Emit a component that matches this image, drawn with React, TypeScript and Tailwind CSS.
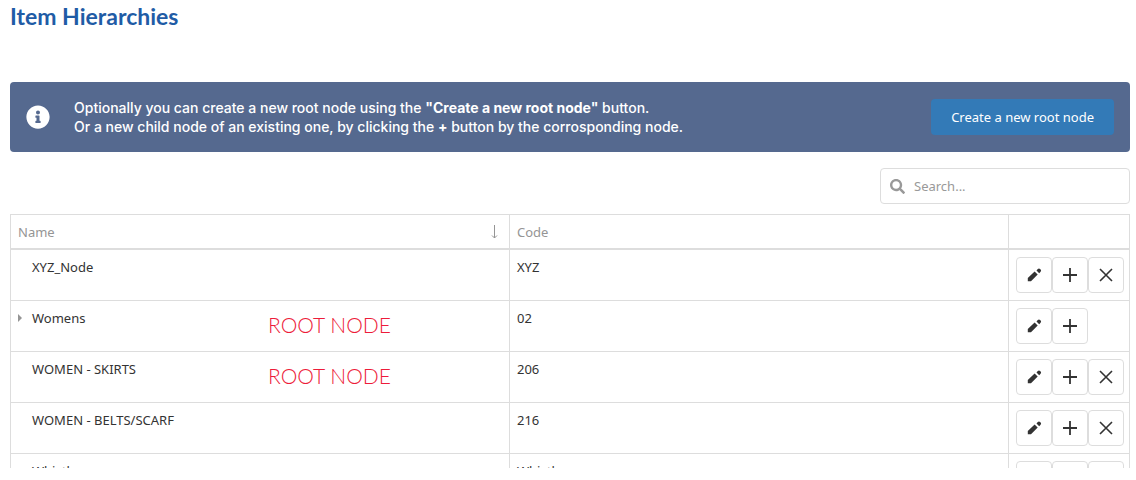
import { useState } from "react";
import { FaInfoCircle, FaSearch } from "react-icons/fa";

interface HierarchyNode {
  name: string;
  code: string;
  note?: string;
  expandable?: boolean;
}

const nodes: HierarchyNode[] = [
  { name: "XYZ_Node", code: "XYZ" },
  { name: "Womens", code: "02", note: "ROOT NODE", expandable: true },
  { name: "WOMEN - SKIRTS", code: "206", note: "ROOT NODE" },
  { name: "WOMEN - BELTS/SCARF", code: "216" },
  { name: "Whistles", code: "Whistles" },
];

function PencilIcon() {
  return (
    <svg className="size-4" viewBox="0 0 16 16" fill="currentColor">
      <path d="M1.800 14.200v-3.200l6.800-6.500 3.100 3L5 14.200zM10.500 3.500l1.300-1.400a1.600 1.600 0 0 1 2.300 0l.5.5a1.600 1.600 0 0 1 0 2.200l-1.400 1.400z" />
    </svg>
  );
}

function PlusIcon() {
  return (
    <svg className="size-4" viewBox="0 0 16 16" stroke="currentColor" strokeWidth={1.8}>
      <path d="M8 1v14M1 8h14" />
    </svg>
  );
}

function CloseIcon() {
  return (
    <svg className="size-4" viewBox="0 0 16 16" stroke="currentColor" strokeWidth={1.6}>
      <path d="M2 2l12 12M14 2L2 14" />
    </svg>
  );
}

function IconButton({ label, children }: { label: string; children: React.ReactNode }) {
  return (
    <button
      type="button"
      aria-label={label}
      className="flex size-9 shrink-0 items-center justify-center rounded border border-[#ddd] bg-white text-[#333] hover:bg-gray-100"
    >
      {children}
    </button>
  );
}

function NodeRow({ node }: { node: HierarchyNode }) {
  return (
    <tr className="h-[51px] border-b border-[#ddd] align-top">
      <td className="relative border-r border-[#ddd] px-[7px] py-2">
        <div className="flex items-center">
          <span className="flex w-[14px]">
            {node.expandable && (
              <button type="button" aria-label={`Expand ${node.name}`}>
                <svg className="h-2 w-1" viewBox="0 0 4 8" fill="#959595">
                  <path d="M0 0l4 4-4 4z" />
                </svg>
              </button>
            )}
          </span>
          {node.name}
        </div>
        {node.note && (
          <span className="absolute inset-x-0 top-0 pl-[257px] font-[Lato,sans-serif] text-[21px] leading-[48px] font-light text-[#ed1c3a]">
            {node.note}
          </span>
        )}
      </td>
      <td className="border-r border-[#ddd] px-[7px] py-2">{node.code}</td>
      <td className="py-[7px] pl-[7px]">
        <div className="flex">
          <IconButton label={`Edit ${node.name}`}>
            <PencilIcon />
          </IconButton>
          <IconButton label={`Add child to ${node.name}`}>
            <PlusIcon />
          </IconButton>
          {!node.expandable && (
            <IconButton label={`Delete ${node.name}`}>
              <CloseIcon />
            </IconButton>
          )}
        </div>
      </td>
    </tr>
  );
}

export default function App() {
  const [search, setSearch] = useState("");

  const visible = nodes.filter((n) =>
    n.name.toLowerCase().includes(search.toLowerCase())
  );

  return (
    <main className="flex h-screen flex-col bg-white pr-1.5 pb-3 pl-2.5 font-['Noto_Sans',sans-serif] text-[13px] leading-[18px] text-[#333]">
      <h1 className="font-[Lato,sans-serif] text-[23px] leading-8 font-bold text-[#1f5ca6]">
        Item Hierarchies
      </h1>

      <section className="mt-[50px] flex items-center rounded bg-[#55698f] p-4 text-white">
        <FaInfoCircle className="size-6" />
        <p className="ml-6 flex-1 font-[Inter,sans-serif] text-sm leading-[19px] font-medium">
          Optionally you can create a new root node using the{" "}
          <b>"Create a new root node"</b> button.
          <br />
          Or a new child node of an existing one, by clicking the <b>+</b> button
          by the corrosponding node.
        </p>
        <button
          type="button"
          className="h-9 rounded bg-[#337ab7] px-5 hover:bg-[#286090]"
        >
          Create a new root node
        </button>
      </section>

      <label className="mt-4 flex h-9 w-[250px] shrink-0 items-center self-end rounded border border-[#ddd] px-[9px]">
        <FaSearch className="size-[15px] text-[#999]" />
        <input
          type="text"
          aria-label="Search"
          placeholder="Search..."
          value={search}
          onChange={(e) => setSearch(e.target.value)}
          className="ml-[9px] min-w-0 flex-1 outline-none placeholder:text-[#999]"
        />
      </label>

      <div className="mt-2.5 min-h-0 flex-1 overflow-hidden border-x border-t border-[#ddd]">
        <table className="w-full table-fixed border-collapse text-left">
          <colgroup>
            <col />
            <col />
            <col className="w-[121px]" />
          </colgroup>
          <thead className="text-[#959595]">
            <tr className="h-[34px] border-b-2 border-[#ddd]">
              <th className="border-r border-[#ddd] px-[7px] font-normal">
                <div className="flex items-center justify-between">
                  Name
                  <svg
                    className="mr-1 h-4 w-2"
                    viewBox="0 0 8 16"
                    fill="none"
                    stroke="currentColor"
                  >
                    <path d="M4.500 1v13M2 11.500l2.500 2.500 2.500-2.500" />
                  </svg>
                </div>
              </th>
              <th className="border-r border-[#ddd] px-[7px] font-normal">Code</th>
              <th aria-label="Actions" />
            </tr>
          </thead>
          <tbody>
            {visible.map((node) => (
              <NodeRow key={node.name} node={node} />
            ))}
          </tbody>
        </table>
      </div>
    </main>
  );
}
